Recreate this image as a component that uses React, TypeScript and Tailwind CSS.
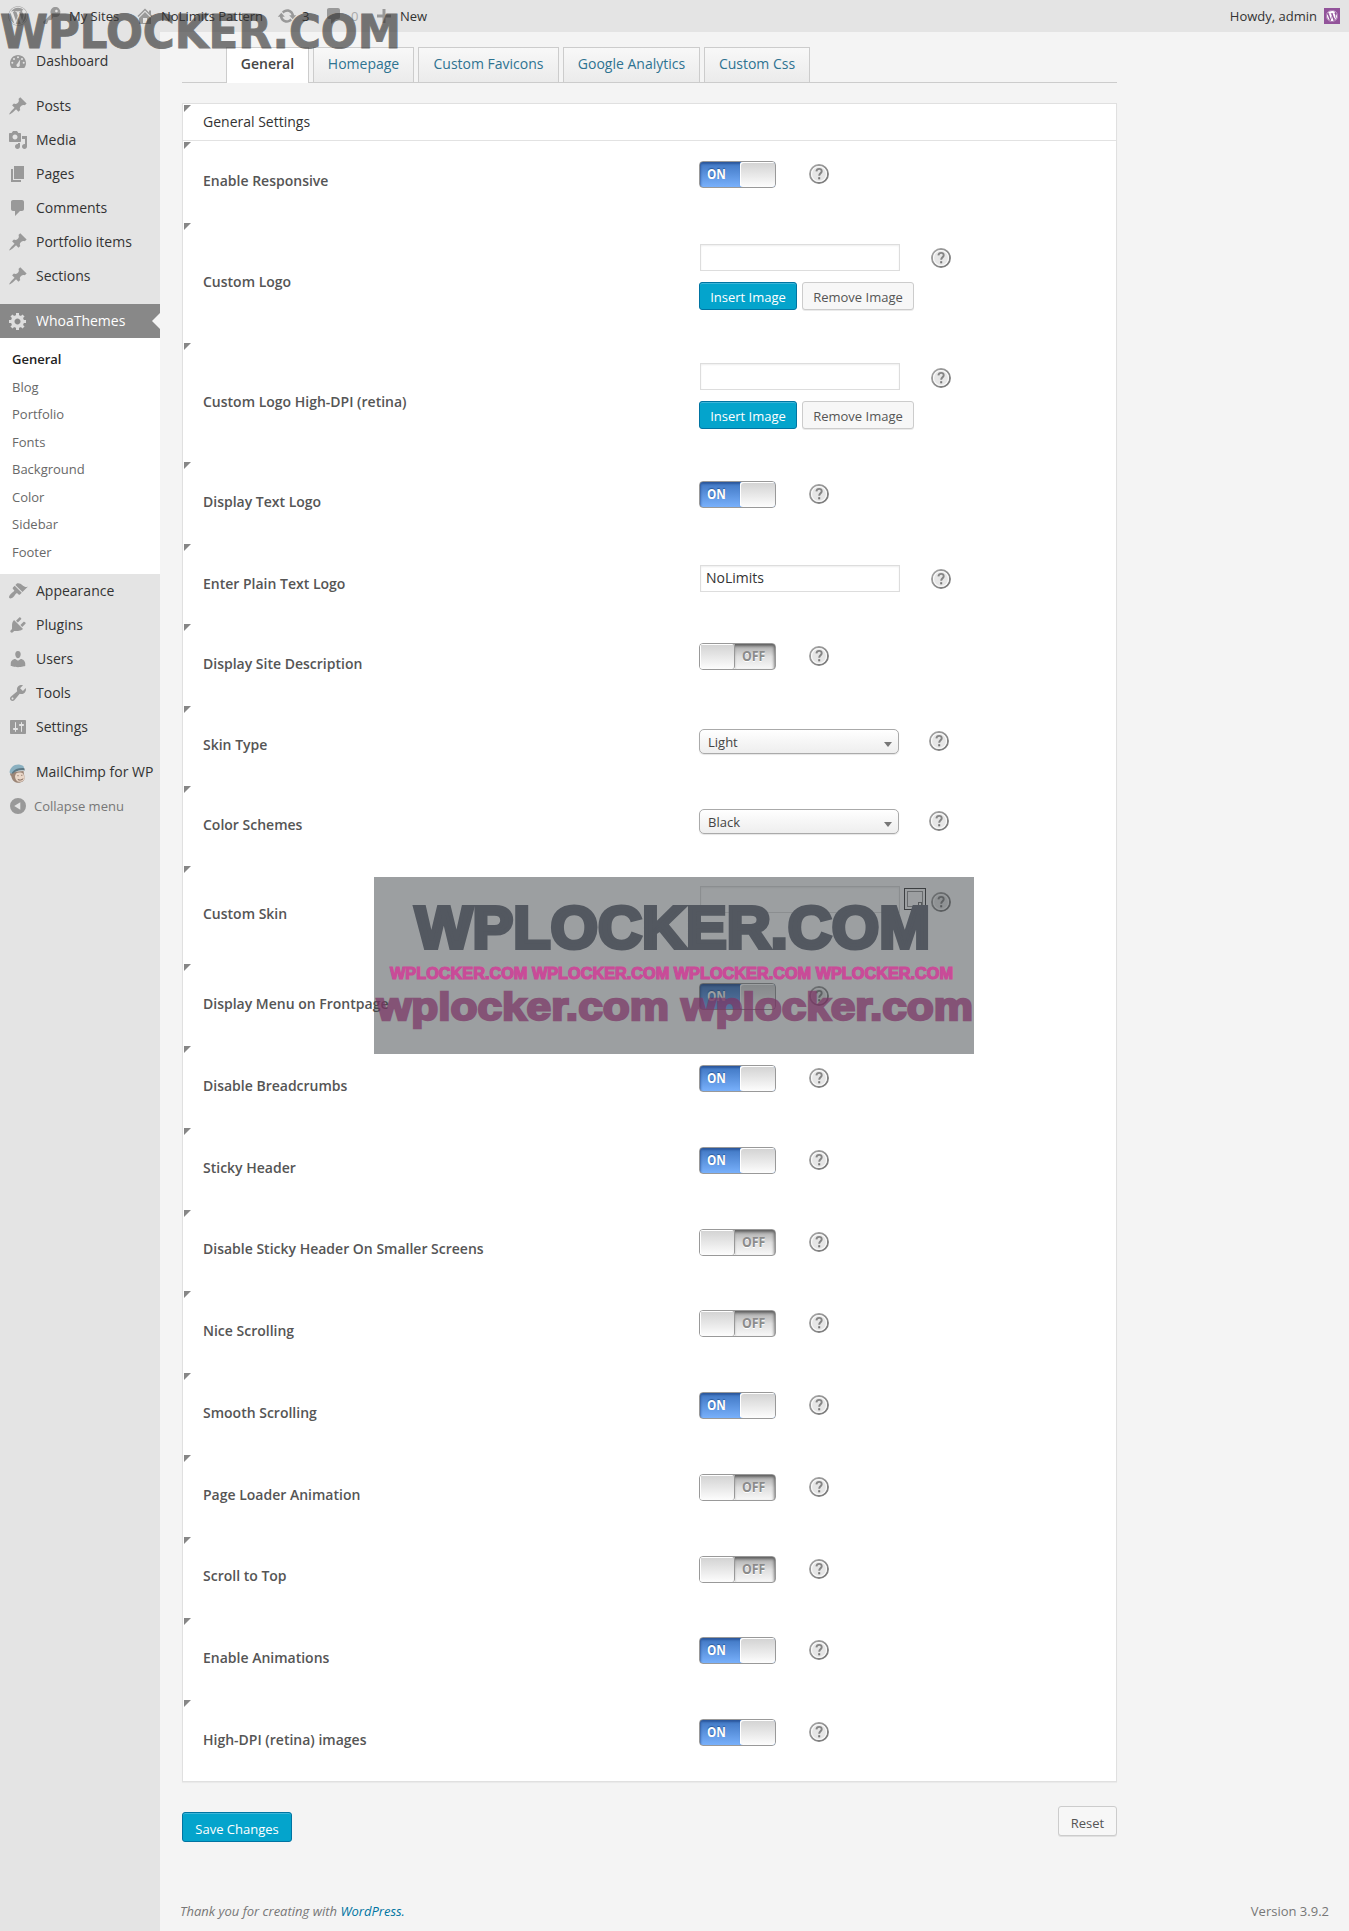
import React from "react";
import { FaWordpress } from "react-icons/fa";

const icons: Record<string, string> = {
  post: "M10.44 3.02l1.82-1.82 6.36 6.35-1.83 1.82c-1.05-.68-2.48-.57-3.41.36l-.75.75c-.92.93-1.04 2.35-.35 3.41l-1.83 1.82-2.41-2.41-2.8 2.79c-.42.42-3.38 2.71-3.8 2.29s1.86-3.39 2.28-3.81l2.79-2.79L4.1 9.36l1.83-1.82c1.05.69 2.48.57 3.4-.36l.75-.75c.93-.92 1.05-2.35.36-3.41z",
  media:
    "M13 11V4c0-.55-.45-1-1-1h-1.67L9 1H5L3.67 3H2c-.55 0-1 .45-1 1v7c0 .55.45 1 1 1h10c.55 0 1-.45 1-1zM7 4.5c1.38 0 2.5 1.12 2.5 2.5S8.38 9.5 7 9.5 4.5 8.38 4.5 7 5.62 4.5 7 4.5zM14 6h5v10.5c0 1.38-1.12 2.5-2.5 2.5S14 17.88 14 16.5s1.12-2.5 2.5-2.5c.17 0 .34.02.5.05V9h-3V6zm-4 8.05V13h2v3.5c0 1.38-1.12 2.5-2.5 2.5S7 17.88 7 16.5 8.12 14 9.5 14c.17 0 .34.02.5.05z",
  page: "M6 15V2h10v13H6zm-1 1h8v2H3V5h2v11z",
  comments:
    "M5 2h9c1.1 0 2 .9 2 2v7c0 1.1-.9 2-2 2h-2l-5 5v-5H5c-1.1 0-2-.9-2-2V4c0-1.1.9-2 2-2z",
  generic:
    "M18 12h-2.18c-.17.7-.44 1.35-.81 1.93l1.54 1.54-2.1 2.1-1.54-1.54c-.58.36-1.23.63-1.91.79V19H8v-2.18c-.68-.16-1.33-.43-1.91-.79l-1.54 1.54-2.12-2.12 1.54-1.54c-.36-.58-.63-1.23-.79-1.91H1V9.03h2.17c.16-.7.44-1.35.8-1.94L2.43 5.55l2.1-2.1 1.54 1.54c.58-.37 1.24-.64 1.93-.81V2h3v2.18c.68.16 1.33.43 1.91.79l1.54-1.54 2.12 2.12-1.54 1.54c.36.59.64 1.24.8 1.94H18V12zm-8.5 1.5c1.66 0 3-1.34 3-3s-1.34-3-3-3-3 1.34-3 3 1.34 3 3 3z",
  appearance:
    "M14.48 11.06L7.41 3.99l1.5-1.5c.5-.56 2.3-.47 3.51.32 1.21.8 1.43 1.28 2.91 2.1 1.18.64 2.45 1.26 4.45.85zm-.71.71L6.7 4.7 4.93 6.47c-.39.39-.39 1.02 0 1.41l1.06 1.06c.39.39.39 1.03 0 1.42-.6.6-1.43 1.11-2.21 1.69-.35.26-.7.53-1.01.84C1.43 14.23.4 16.08 1.4 17.07c.99 1 2.84-.03 4.18-1.36.31-.31.58-.66.85-1.02.57-.78 1.08-1.61 1.69-2.21.39-.39 1.02-.39 1.41 0l1.06 1.06c.39.39 1.02.39 1.41 0z",
  plugins:
    "M13.11 4.36L9.87 7.6 8 5.73l3.24-3.24c.35-.34 1.05-.2 1.56.32.52.51.66 1.21.31 1.55zm-8 1.77l.91-1.12 9.01 9.01-1.19.84c-.71.71-2.63 1.16-3.82 1.16H6.14L4.9 17.26c-.59.59-1.54.59-2.12 0-.59-.58-.59-1.53 0-2.12l1.24-1.24v-3.88c0-1.13.4-3.19 1.09-3.89zm7.26 3.97l3.24-3.24c.34-.35 1.04-.21 1.55.31.52.51.66 1.21.31 1.55l-3.24 3.25z",
  users:
    "M10 9.25c-2.27 0-2.73-3.44-2.73-3.44C7 4.02 7.82 2 9.97 2c2.16 0 2.98 2.02 2.71 3.81 0 0-.41 3.44-2.68 3.44zm0 2.57L12.72 10c2.39 0 4.52 2.33 4.52 4.53v2.49s-3.65 1.13-7.24 1.13c-3.65 0-7.24-1.13-7.24-1.13v-2.49c0-2.25 1.94-4.48 4.47-4.48z",
  tools:
    "M16.68 9.77c-1.34 1.34-3.3 1.67-4.95.99l-5.41 6.52c-.99.99-2.59.99-3.58 0s-.99-2.59 0-3.57l6.52-5.42c-.68-1.65-.35-3.61.99-4.95 1.28-1.28 3.12-1.62 4.72-1.06l-2.89 2.89 2.82 2.82 2.86-2.87c.53 1.58.18 3.39-1.08 4.65zM3.81 16.21c.4.39 1.04.39 1.43 0 .4-.4.4-1.04 0-1.43-.39-.4-1.03-.4-1.43 0-.39.39-.39 1.03 0 1.43z",
  settings:
    "M18 16V4c0-.55-.45-1-1-1H3c-.55 0-1 .45-1 1v12c0 .55.45 1 1 1h14c.55 0 1-.45 1-1zM8 11h1c.55 0 1 .45 1 1s-.45 1-1 1H8v1.5c0 .28-.22.5-.5.5s-.5-.22-.5-.5V13H6c-.55 0-1-.45-1-1s.45-1 1-1h1V5.5c0-.28.22-.5.5-.5s.5.22.5.5V11zm5-2h-1c-.55 0-1-.45-1-1s.45-1 1-1h1V5.5c0-.28.22-.5.5-.5s.5.22.5.5V7h1c.55 0 1 .45 1 1s-.45 1-1 1h-1v5.5c0 .28-.22.5-.5.5s-.5-.22-.5-.5V9z",
  dashboard:
    "M3.76 17h12.48c1.1-1.37 1.76-3.11 1.76-5 0-4.42-3.58-8-8-8s-8 3.58-8 8c0 1.89.66 3.63 1.76 5zM10 5.2a1 1 0 1 1 0 2 1 1 0 0 1 0-2zM6 7a1 1 0 1 1 0 2 1 1 0 0 1 0-2zm8 0a1 1 0 1 1 0 2 1 1 0 0 1 0-2zM4.3 10.8a1 1 0 1 1 0 2 1 1 0 0 1 0-2zm11.4 0a1 1 0 1 1 0 2 1 1 0 0 1 0-2zM12.2 8.6l-.5 5.1a1.7 1.7 0 1 1-2.4-.9z",
  network:
    "M16.95 2.58c1.96 1.95 1.96 5.12 0 7.07-1.51 1.51-3.75 1.84-5.59 1.01l-1.87 3.31-2.99.31L5 18H2l-1-2 7.95-7.69c-.92-1.87-.62-4.18.93-5.73 1.95-1.96 5.12-1.96 7.07 0zm-2.51 3.79c.74 0 1.33-.6 1.33-1.34 0-.73-.59-1.33-1.33-1.33-.73 0-1.33.6-1.33 1.33 0 .74.6 1.34 1.33 1.34z",
  home: "M16 8.5l1.53 1.53-1.06 1.06L10 4.6l-6.47 6.49-1.06-1.06L10 2.5l4 4v-2h2v4zm-6-2.46l6 5.99V18H4v-5.97zM12 17v-5H8v5h4z",
  update:
    "M10.2 3.28c3.53 0 6.43 2.61 6.92 6h2.08l-3.5 4-3.5-4h2.32c-.45-1.97-2.21-3.45-4.32-3.45-1.45 0-2.73.71-3.54 1.78L4.95 5.66C6.23 4.2 8.11 3.28 10.2 3.28zm-.4 13.44c-3.52 0-6.43-2.61-6.92-6H.8l3.5-4c1.17 1.33 2.33 2.67 3.5 4H5.48c.45 1.97 2.21 3.45 4.32 3.45 1.45 0 2.73-.71 3.54-1.78l1.71 1.95c-1.28 1.46-3.15 2.38-5.25 2.38z",
  plus: "M17 8.5v3h-5.5V17h-3v-5.500H3v-3h5.500V3h3v5.500z",
  collapse:
    "M10 2a8 8 0 1 0 0 16 8 8 0 0 0 0-16zM12.300 6.200v7.600L6.200 10z",
};

function Icon({ name, className = "text-[#999]" }: { name: string; className?: string }) {
  return (
    <svg viewBox="0 0 20 20" className={`size-5 shrink-0 ${className}`} fill="currentColor" fillRule="evenodd">
      <path d={icons[name]} />
    </svg>
  );
}

function Chimp() {
  return (
    <svg viewBox="0 0 20 20" className="mt-[3px] size-5 shrink-0">
      <path d="M4 8c-2 0-2.500 3-.8 4 .6 3 2.500 6.500 6.300 6.800 4.500.3 7.500-2.300 7-5.500L15.500 7z" fill="#9b8576" />
      <path d="M8 9.500c2-1.500 6-1 7.300.2.500 2 1.700 3.300 1.200 5-.7 2.300-3.400 3.400-5.700 3.100C8 17.400 7 14 7 12z" fill="#ead7c8" />
      <path d="M1.500 8.500C2 3.500 6.500-.3 12 .7c3 .4 4.300 1.800 3.800 3.600C10.500 4.500 6 6 3.500 9.800z" fill="#8ab0c0" />
      <path d="M4 8.500C6.500 5 11 3.700 16.400 4.200l.4 2.300C11 5.800 7.500 7 4.600 10z" fill="#5d7884" />
      <path d="M10 11.200v1M13.800 10.800v1M9.800 15.500c1.500 1 4 .7 5.400-.8" stroke="#6d5548" strokeWidth=".9" fill="none" />
    </svg>
  );
}

function MenuItem({ icon, label }: { icon: string; label: string }) {
  return (
    <a className="flex h-[34px] items-center gap-2 whitespace-nowrap pl-2 text-sm text-[#333]">
      {icon === "chimp" ? <Chimp /> : <Icon name={icon} />}
      {label}
    </a>
  );
}

function Help() {
  return (
    <svg viewBox="0 0 20 20" className="size-5 shrink-0">
      <defs>
        <linearGradient id="ring" x1="0" y1="0" x2="1" y2="1">
          <stop offset="0" stopColor="#a8a8a8" />
          <stop offset="1" stopColor="#757575" />
        </linearGradient>
      </defs>
      <circle cx="10" cy="10" r="9" fill="#e6e6e6" stroke="url(#ring)" strokeWidth="1.900" />
      <circle cx="10" cy="10" r="7.500" fill="none" stroke="#fafafa" strokeWidth="1.200" />
      <path d="M7.400 7.400c.2-1.700 1.300-2.500 2.700-2.500 1.500 0 2.600.9 2.600 2.300 0 2-2.500 2.200-2.500 4.500" fill="none" stroke="#858585" strokeWidth="1.900" />
      <rect x="9.200" y="13.200" width="2" height="2.100" fill="#777" />
    </svg>
  );
}

function Toggle({ on }: { on: boolean }) {
  return on ? (
    <div className="flex h-[27px] w-[77px] overflow-hidden rounded-[4px] border border-[#999] bg-gradient-to-b from-[#3f76c2] to-[#78b0fb]">
      <div className="w-10 pl-[7px] text-[14px] font-bold leading-[23px] text-white shadow-[inset_1px_2px_2px_rgba(20,50,110,0.45)]">
        <span className="inline-block origin-left scale-x-[.84] [text-shadow:0_-1px_1px_#2a5a9a]">ON</span>
      </div>
      <div className="flex-1 rounded-l-[3px] bg-gradient-to-b from-[#d2d2d2] to-[#fdfdfd] shadow-[inset_1px_1px_0_#fff]" />
    </div>
  ) : (
    <div className="flex h-[27px] w-[77px] overflow-hidden rounded-[4px] border border-[#999] bg-gradient-to-b from-[#a8a8a8] via-[#dedede] to-[#f8f8f8]">
      <div className="w-[35px] rounded-r-[3px] border-r border-[#999] bg-gradient-to-b from-[#d2d2d2] to-[#fdfdfd] shadow-[inset_1px_1px_0_#fff]" />
      <div className="flex-1 pl-[7px] text-[14px] font-bold leading-[24px] text-[#8b8b8b] shadow-[inset_-1px_2px_3px_rgba(0,0,0,0.45)]">
        <span className="inline-block origin-left scale-x-[.88] [text-shadow:0_1px_0_#fff]">OFF</span>
      </div>
    </div>
  );
}

function TextField({ value }: { value?: string }) {
  return (
    <div className="ml-px h-[27px] w-[200px] border border-[#ddd] bg-white pl-[5px] text-sm leading-[24px] text-[#333] shadow-[inset_0_1px_2px_rgba(0,0,0,0.07)]">
      {value}
    </div>
  );
}

function Select({ value }: { value: string }) {
  return (
    <div className="flex h-[25px] w-[200px] items-center justify-between rounded-[5px] border border-[#aaa] bg-gradient-to-b from-white via-[#f6f6f6] to-[#eee] pl-2 pr-[6px] text-[13px] text-[#444] shadow-[0_1px_1px_rgba(0,0,0,0.1)]">
      <span className="pt-[3px]">{value}</span>
      <span className="mt-[5px] h-0 w-0 border-x-4 border-t-[5px] border-x-transparent border-t-[#777]" />
    </div>
  );
}

function ImageButtons() {
  return (
    <div className="flex gap-[5px] text-[13px]">
      <button className="h-7 w-[98px] rounded-[3px] border border-[#0074a2] bg-[#04a4cc] pt-[2px] leading-[24px] text-white shadow-[inset_0_1px_0_rgba(120,200,230,0.5)]">Insert Image</button>
      <button className="h-7 w-[112px] rounded-[3px] border border-[#ccc] bg-[#f7f7f7] pt-[2px] leading-[24px] text-[#555] shadow-[0_1px_0_rgba(0,0,0,0.08)]">Remove Image</button>
    </div>
  );
}

type Kind = "on" | "off" | "text" | "image" | "select" | "color";
type Row = { label: string; kind: Kind; h: string; lab: string; top: string; help: string; gap?: string; value?: string };

const T = { lab: "pt-[30px]", top: "pt-[19px]", help: "pt-[22px]" };
const rows: Row[] = [
  { label: "Enable Responsive", kind: "on", h: "h-[81px]", ...T, lab: "pt-[29px]" },
  { label: "Custom Logo", kind: "image", h: "h-[120px]", lab: "pt-[49px]", top: "pt-[21px]", gap: "gap-[11px]", help: "pt-[25px]" },
  { label: "Custom Logo High-DPI (retina)", kind: "image", h: "h-[119px]", lab: "pt-[49px]", top: "pt-[20px]", gap: "gap-[11px]", help: "pt-[25px]" },
  { label: "Display Text Logo", kind: "on", h: "h-[82px]", ...T },
  { label: "Enter Plain Text Logo", kind: "text", h: "h-[80px]", lab: "pt-[30px]", top: "pt-[21px]", help: "pt-[25px]", value: "NoLimits" },
  { label: "Display Site Description", kind: "off", h: "h-[82px]", ...T },
  { label: "Skin Type", kind: "select", h: "h-[80px]", lab: "pt-[29px]", top: "pt-[23px]", help: "pt-[25px]", value: "Light" },
  { label: "Color Schemes", kind: "select", h: "h-[80px]", lab: "pt-[29px]", top: "pt-[23px]", help: "pt-[25px]", value: "Black" },
  { label: "Custom Skin", kind: "color", h: "h-[98px]", lab: "pt-[38px]", top: "pt-[20px]", help: "pt-[26px]" },
  { label: "Display Menu on Frontpage", kind: "on", h: "h-[82px]", ...T },
  { label: "Disable Breadcrumbs", kind: "on", h: "h-[82px]", ...T },
  { label: "Sticky Header", kind: "on", h: "h-[82px]", ...T },
  { label: "Disable Sticky Header On Smaller Screens", kind: "off", h: "h-[81px]", ...T, lab: "pt-[29px]" },
  { label: "Nice Scrolling", kind: "off", h: "h-[82px]", ...T },
  { label: "Smooth Scrolling", kind: "on", h: "h-[82px]", ...T },
  { label: "Page Loader Animation", kind: "off", h: "h-[82px]", ...T },
  { label: "Scroll to Top", kind: "off", h: "h-[81px]", ...T, lab: "pt-[29px]" },
  { label: "Enable Animations", kind: "on", h: "h-[82px]", ...T },
  { label: "High-DPI (retina) images", kind: "on", h: "h-[81px]", ...T },
];

function Corner() {
  return <span className="ml-px mr-[12px] size-[7px] shrink-0 bg-[#868686] [clip-path:polygon(0_0,100%_0,0_100%)]" />;
}

const controlWidth: Record<Kind, string> = {
  on: "w-[110px]",
  off: "w-[110px]",
  text: "w-[232px]",
  image: "w-[232px]",
  select: "w-[230px]",
  color: "w-[232px]",
};

function SettingRow({ row }: { row: Row }) {
  return (
    <div className={`flex ${row.h}`}>
      <Corner />
      <div className={`w-[496px] shrink-0 text-sm font-semibold leading-5 text-[#555] ${row.lab}`}>{row.label}</div>
      <div className={`${row.top} ${controlWidth[row.kind]} shrink-0`}>
        {row.kind === "on" && <Toggle on />}
        {row.kind === "off" && <Toggle on={false} />}
        {row.kind === "text" && <TextField value={row.value} />}
        {row.kind === "select" && <Select value={row.value ?? ""} />}
        {row.kind === "image" && (
          <div className={`flex flex-col ${row.gap}`}>
            <TextField />
            <ImageButtons />
          </div>
        )}
        {row.kind === "color" && (
          <div className="flex gap-1">
            <TextField />
            <div className="mt-[2px] flex size-[22px] items-center justify-center border border-[#444] bg-white">
              <div className="flex size-[16px] items-end justify-end border border-[#999]">
                <span className="size-[4px] border border-[#777]" />
              </div>
            </div>
          </div>
        )}
      </div>
      <div className={row.help}>
        <Help />
      </div>
    </div>
  );
}

function Watermarks() {
  return (
    <>
      <svg className="pointer-events-none absolute left-0 top-0 h-[60px] w-[420px]" viewBox="0 0 420 60">
        <g opacity=".64">
          <text x="0" y="47.500" fontFamily="DejaVu Sans" fontWeight="700" fontSize="46.500" textLength="401" lengthAdjust="spacingAndGlyphs" fill="#333" stroke="#333" strokeWidth="1">
            WPLOCKER.COM
          </text>
        </g>
      </svg>
      <svg className="pointer-events-none absolute left-[374px] top-[877px] h-[177px] w-[600px]" viewBox="0 0 600 177" fontFamily="Liberation Sans" fontWeight="700">
        <rect width="600" height="177" fill="#353c40" fillOpacity=".49" />
        <text x="41" y="70.500" fontSize="58.500" textLength="515" lengthAdjust="spacingAndGlyphs" fill="#535860" stroke="#535860" strokeWidth="4">
          WPLOCKER.COM
        </text>
        <text x="16" y="101.500" fontSize="16" textLength="563" lengthAdjust="spacingAndGlyphs" fill="#c94b98" stroke="#c94b98" strokeWidth="1.200">
          WPLOCKER.COM WPLOCKER.COM WPLOCKER.COM WPLOCKER.COM
        </text>
        <g opacity=".72">
          <text x="3" y="143" fontSize="39.500" textLength="596" lengthAdjust="spacingAndGlyphs" fill="#7c3666" stroke="#7c3666" strokeWidth="2.400">
            wplocker.com wplocker.com
          </text>
        </g>
      </svg>
    </>
  );
}

const tabs = [
  { label: "Homepage", w: "w-[101px]" },
  { label: "Custom Favicons", w: "w-[141px]" },
  { label: "Google Analytics", w: "w-[137px]" },
  { label: "Custom Css", w: "w-[106px]" },
];

export default function App() {
  return (
    <div className="relative h-[1931px] w-[1349px] overflow-hidden bg-[#f4f4f4] font-['Open_Sans',sans-serif]">
      <header className="flex h-8 items-center bg-[#e4e4e4] text-[13px] leading-8 text-[#333]">
        <FaWordpress className="ml-2 mr-[14px] size-5 text-[#999]" />
        <Icon name="network" />
        <span className="ml-[7px] w-[66px]">My Sites</span>
        <Icon name="home" />
        <span className="ml-[6px] w-[116px] whitespace-nowrap">NoLimits Pattern</span>
        <Icon name="update" />
        <span className="ml-[5px] w-[22px]">3</span>
        <Icon name="comments" />
        <span className="ml-[7px] w-[23px] text-[#aaa]">0</span>
        <Icon name="plus" />
        <span className="ml-[6px]">New</span>
        <span className="ml-auto">Howdy, admin</span>
        <span className="ml-[7px] mr-[9px] flex size-4 items-center justify-center bg-[#92539a] text-white">
          <FaWordpress className="size-3" />
        </span>
      </header>

      <div className="flex h-[1899px]">
        <nav className="w-40 shrink-0 bg-[#e4e4e4] pt-3">
          <MenuItem icon="dashboard" label="Dashboard" />
          <div className="mt-[11px]">
            <MenuItem icon="post" label="Posts" />
            <MenuItem icon="media" label="Media" />
            <MenuItem icon="page" label="Pages" />
            <MenuItem icon="comments" label="Comments" />
            <MenuItem icon="post" label="Portfolio items" />
            <MenuItem icon="post" label="Sections" />
          </div>
          <a className="mt-[11px] flex h-[34px] items-center gap-2 bg-[#888] pl-2 text-sm text-white">
            <Icon name="generic" className="text-[#ddd]" />
            WhoaThemes
            <span className="ml-auto h-0 w-0 border-y-8 border-r-8 border-y-transparent border-r-[#f4f4f4]" />
          </a>
          <div className="h-[236px] bg-white pl-3 pt-2 text-[13px] leading-[27.500px] text-[#686868]">
            <div className="font-semibold text-[#222]">General</div>
            <div>Blog</div>
            <div>Portfolio</div>
            <div>Fonts</div>
            <div>Background</div>
            <div>Color</div>
            <div>Sidebar</div>
            <div>Footer</div>
          </div>
          <MenuItem icon="appearance" label="Appearance" />
          <MenuItem icon="plugins" label="Plugins" />
          <MenuItem icon="users" label="Users" />
          <MenuItem icon="tools" label="Tools" />
          <MenuItem icon="settings" label="Settings" />
          <div className="mt-[11px]">
            <MenuItem icon="chimp" label="MailChimp for WP" />
            <a className="flex h-[34px] items-center gap-[6px] pl-2 text-[13px] text-[#777]">
              <Icon name="collapse" />
              <span className="pt-[2px]">Collapse menu</span>
            </a>
          </div>
        </nav>

        <main className="flex flex-1 flex-col pl-[22px]">
          <div className="mt-[15px] flex h-9 w-[935px] items-end gap-1 border-b border-[#ccc] pl-11 text-sm leading-[31px]">
            <div className="-mb-px h-9 w-[83px] border border-b-0 border-[#ccc] bg-white text-center font-semibold text-[#464646]">General</div>
            {tabs.map((t) => (
              <div key={t.label} className={`h-[35px] whitespace-nowrap border border-b-0 border-[#ccc] bg-gradient-to-b from-[#f8f8f8] to-[#ebebeb] text-center text-[#2e7391] ${t.w}`}>
                {t.label}
              </div>
            ))}
          </div>

          <section className="mt-5 w-[935px] border border-[#e0e0e0] bg-white shadow-[0_1px_1px_rgba(0,0,0,0.04)]">
            <div className="flex h-[37px] border-b border-[#e2e2e2] pt-px">
              <Corner />
              <span className="pt-[7px] text-sm leading-5 text-[#333]">General Settings</span>
            </div>
            <div className="pt-px">
              {rows.map((row) => (
                <SettingRow key={row.label} row={row} />
              ))}
            </div>
          </section>

          <div className="mt-6 flex w-[935px] justify-between text-[13px]">
            <button className="mt-[6px] h-[30px] w-[110px] rounded-[3px] border border-[#0074a2] bg-[#04a4cc] pt-[4px] leading-[24px] text-white shadow-[inset_0_1px_0_rgba(120,200,230,0.5)]">Save Changes</button>
            <button className="h-[30px] w-[59px] rounded-[3px] border border-[#ccc] bg-[#f7f7f7] pt-[4px] leading-[24px] text-[#555] shadow-[0_1px_0_rgba(0,0,0,0.08)]">Reset</button>
          </div>

          <footer className="-ml-[2px] mb-[10px] mr-[20px] mt-auto flex justify-between text-[13px] leading-5 text-[#777]">
            <em>
              Thank you for creating with <a className="text-[#0074a2]">WordPress.</a>
            </em>
            <span>Version 3.9.2</span>
          </footer>
        </main>
      </div>

      <Watermarks />
    </div>
  );
}
